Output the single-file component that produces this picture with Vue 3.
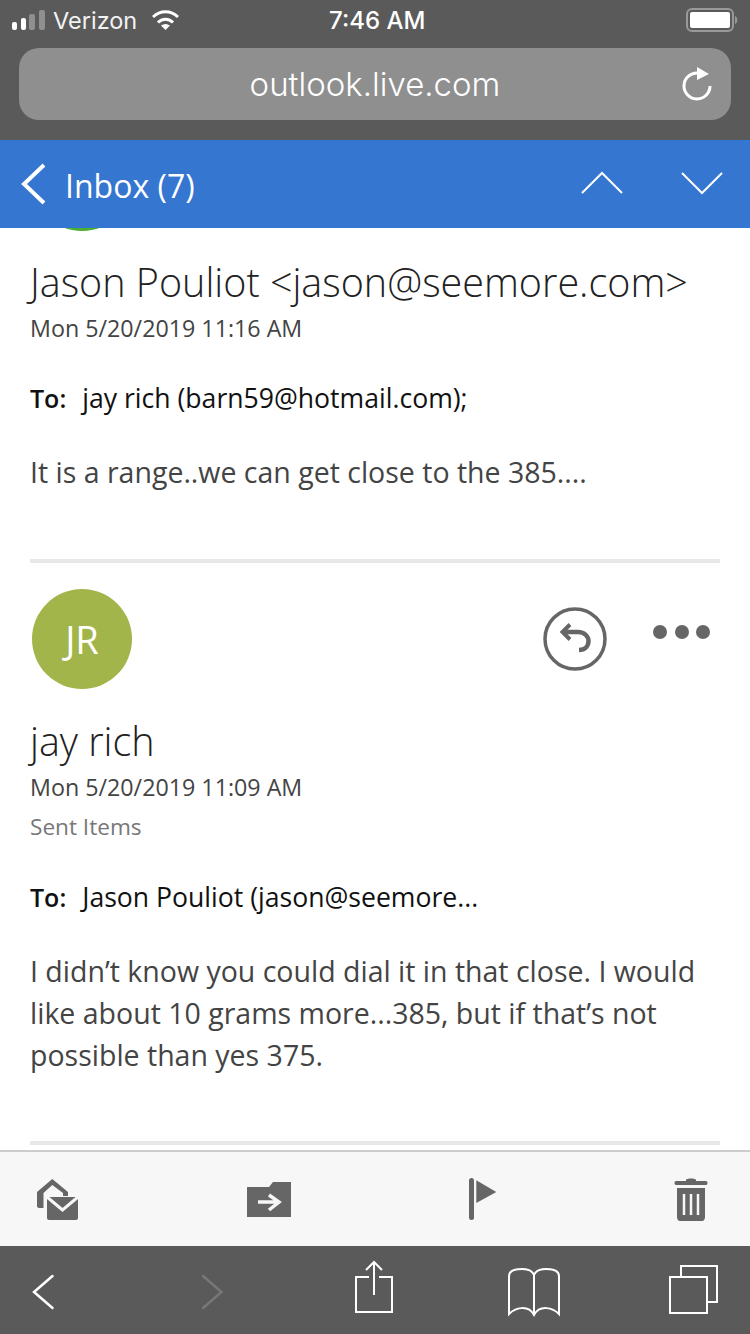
<template>
  <div class="phone">
    <div class="chrome">
      <div class="status">
        <div class="status-left">
          <svg width="34" height="22" viewBox="0 0 34 22">
            <rect x="0" y="13" width="5" height="8" rx="2" fill="#fff" />
            <rect x="9" y="9" width="5" height="12" rx="2" fill="#fff" />
            <rect x="17" y="5" width="6" height="16" rx="2" fill="#8f8f8f" />
            <rect x="27" y="1" width="6" height="20" rx="2" fill="#8f8f8f" />
          </svg>
          <span class="carrier">Verizon</span>
          <svg class="wifi" width="27" height="20" viewBox="0 0 27 20" fill="none" stroke="#fff" stroke-width="3">
            <path d="M1 7C8 0 19 0 26 7" />
            <path d="M6 12.500C10 8 17 8 21 12.500" />
            <path d="M13.500 20L9 15.500C12 13.500 15 13.500 18 15.500Z" fill="#fff" stroke="none" />
          </svg>
        </div>
        <span class="clock">7:46 AM</span>
        <svg class="battery" width="52" height="24" viewBox="0 0 52 24">
          <rect x="1" y="1" width="46" height="22" rx="5" fill="none" stroke="#999" stroke-width="2" />
          <rect x="4" y="4" width="40" height="16" rx="2" fill="#fff" />
          <path d="M49 8C52 9 52 15 49 16Z" fill="#999" />
        </svg>
      </div>
      <div class="address">
        <span class="url">outlook.live.com</span>
        <svg class="reload" width="34" height="38" viewBox="0 0 34 38" fill="none">
          <path d="M18 9A13 13 0 1 0 30 22" stroke="#fff" stroke-width="3" />
          <path d="M17 3L29 10L17 16Z" fill="#fff" />
        </svg>
      </div>
    </div>

    <div class="nav">
      <svg width="28" height="42" viewBox="0 0 28 42" fill="none" stroke="#fff" stroke-width="4">
        <path d="M25 2L5 21L25 40" />
      </svg>
      <span class="inbox">Inbox (7)</span>
      <svg class="arrow" width="42" height="24" viewBox="0 0 42 24" fill="none" stroke="#fff" stroke-width="2">
        <path d="M1 22L21 2L41 22" />
      </svg>
      <svg class="arrow" width="42" height="24" viewBox="0 0 42 24" fill="none" stroke="#fff" stroke-width="2">
        <path d="M1 2L21 22L41 2" />
      </svg>
    </div>

    <main class="thread">
      <div class="avatar-peek"></div>
      <section class="message first">
        <h2 class="sender">Jason Pouliot &lt;jason@seemore.com&gt;</h2>
        <div class="date">Mon 5/20/2019 11:16 AM</div>
        <div class="to"><b>To:</b><span>jay rich (barn59@hotmail.com);</span></div>
        <p class="body">It is a range..we can get close to the 385....</p>
      </section>
      <section class="message second">
        <div class="msg-head">
          <div class="avatar">JR</div>
          <div class="actions">
            <svg width="64" height="64" viewBox="0 0 64 64" fill="none" stroke="#666">
              <circle cx="32" cy="32" r="30" stroke-width="3.500" />
              <path d="M27 17.500L19.500 25L27 32.500" stroke-width="4" />
              <path d="M20 25H35C42 25 45.500 30 45.500 34C45.500 39 42 43 36 43" stroke-width="4.500" />
            </svg>
            <div class="dots"><i></i><i></i><i></i></div>
          </div>
        </div>
        <h2 class="sender name-below">jay rich</h2>
        <div class="date">Mon 5/20/2019 11:09 AM</div>
        <div class="folder">Sent Items</div>
        <div class="to"><b>To:</b><span>Jason Pouliot (jason@seemore...</span></div>
        <p class="body">I didn’t know you could dial it in that close. I would like about 10 grams more...385, but if that’s not possible than yes 375.</p>
      </section>
    </main>

    <div class="toolbar">
      <svg width="42" height="41" viewBox="0 0 42 41">
        <path d="M0 13L15.300 0L31 13V17H26V14L15.300 6L6.500 14V29H2C1 29 0 28 0 27Z" fill="#666" />
        <path d="M10 18H41V39C41 40 40 41 39 41H12C11 41 10 40 10 39Z" fill="#666" />
        <path d="M10 18L25.500 31L41 18" fill="none" stroke="#f7f7f7" stroke-width="3" />
      </svg>
      <svg class="tb-move" width="44" height="35" viewBox="0 0 44 35">
        <path d="M0 5H22L26 0H44V35H0Z" fill="#666" />
        <path d="M11 20H32M22 13L32 20L22 28" fill="none" stroke="#f7f7f7" stroke-width="3.500" />
      </svg>
      <svg class="tb-flag" width="28" height="42" viewBox="0 0 28 42">
        <rect x="0" y="0" width="5" height="42" rx="2.500" fill="#666" />
        <path d="M7.300 2.300L27.300 14L7.300 25Z" fill="#666" />
      </svg>
      <svg class="tb-trash" width="34" height="43" viewBox="0 0 34 43">
        <path d="M12 2C12 0 22 0 22 2V3H32C34 3 34 7 32 7H2C0 7 0 3 2 3H12Z" fill="#666" />
        <path d="M3 10H31V39C31 41 30 43 28 43H6C4 43 3 41 3 39Z" fill="#666" />
        <path d="M10 16V37M17 16V37M24 16V37" stroke="#f7f7f7" stroke-width="2.500" />
      </svg>
    </div>

    <div class="browser-bar">
      <svg width="24" height="64" viewBox="0 0 24 64" fill="none" stroke="#fff" stroke-width="2.500" stroke-linecap="round">
        <path d="M21.500 18L3 34L21.500 50" />
      </svg>
      <svg class="bb-forward" width="24" height="64" viewBox="0 0 24 64" fill="none" stroke="#777" stroke-width="2.500" stroke-linecap="round">
        <path d="M3 18L21.500 34L3 50" />
      </svg>
      <svg class="bb-share" width="40" height="64" viewBox="0 0 40 64" fill="none" stroke="#fff" stroke-width="2">
        <path d="M15 19H2V54H38V19H25" />
        <path d="M20 37V5M12 12L20 4L28 12" />
      </svg>
      <svg class="bb-book" width="54" height="64" viewBox="0 0 54 64" fill="none" stroke="#fff" stroke-width="2">
        <path d="M27 17C25 12 21 11 15 11C8 11 2 13 2 18V56C8 50 21 46 27 57C33 46 46 50 52 56V18C52 13 46 11 39 11C33 11 29 12 27 17ZM27 17V56" />
      </svg>
      <svg class="bb-tabs" width="51" height="64" viewBox="0 0 51 64" fill="none" stroke="#fff" stroke-width="2">
        <path d="M13 19V8H49V44H39" />
        <rect x="2" y="19" width="37" height="36" />
      </svg>
    </div>
  </div>
</template>

<script setup>
</script>

<style>
html,
body {
  margin: 0;
  background: #fff;
}
</style>

<style scoped>
.phone {
  width: 750px;
  height: 1334px;
  display: flex;
  flex-direction: column;
  overflow: hidden;
  font-family: "Open Sans", "Noto Sans", sans-serif;
}

.chrome {
  height: 140px;
  background: #5a5a5a;
  color: #fff;
  box-sizing: border-box;
  padding: 0 19px 0 12px;
  position: relative;
  z-index: 1;
}

.status {
  height: 40px;
  margin: 0 -7px 8px 0;
  display: flex;
  align-items: center;
  justify-content: space-between;
  position: relative;
  font-family: Inter, "Liberation Sans", sans-serif;
  font-size: 23.500px;
}

.status-left {
  display: flex;
  align-items: center;
  gap: 7px;
}

.carrier {
  color: #f2f2f2;
}

.wifi {
  margin-left: 8px;
}

.clock {
  position: absolute;
  left: 317px;
  top: 6px;
  font-size: 24px;
  font-weight: 500;
}

.address {
  height: 72px;
  margin-left: 7px;
  border-radius: 20px;
  background: #8f8f8f;
  display: flex;
  align-items: center;
  justify-content: center;
  position: relative;
}

.url {
  font-family: Inter, "Liberation Sans", sans-serif;
  font-size: 33px;
  font-weight: 300;
}

.reload {
  position: absolute;
  right: 17px;
  top: 16px;
}

.nav {
  height: 88px;
  background: #3476d0;
  color: #fff;
  display: flex;
  align-items: center;
  padding: 0 27px 0 19px;
  position: relative;
  z-index: 1;
}

.inbox {
  font-size: 32px;
  margin: 2px auto 0 18px;
}

.arrow {
  margin: -2px 0 0 58px;
}

.thread {
  flex: 1;
  min-height: 0;
  background: #fff;
  position: relative;
  padding: 0 30px;
}

.avatar-peek {
  position: absolute;
  left: 32px;
  top: -97px;
  width: 100px;
  height: 100px;
  border-radius: 50%;
  background: #4caf2f;
}

.message {
  border-bottom: 4px solid #e8e8e8;
  box-sizing: border-box;
}

.first {
  padding-top: 28px;
  height: 335px;
}

.second {
  padding-top: 26px;
  height: 582px;
}

.sender {
  margin: 0;
  font-size: 39.500px;
  font-weight: 300;
  line-height: 52px;
  color: #222;
}

.name-below {
  margin-top: 26px;
}

.date {
  font-size: 23.250px;
  line-height: 32px;
  color: #444;
  margin-top: 4px;
}

.folder {
  font-size: 22.600px;
  line-height: 32px;
  color: #777;
  margin-top: 8px;
}

.to {
  display: flex;
  gap: 16px;
  font-size: 26.600px;
  line-height: 36px;
  color: #111;
  margin-top: 36px;
}

.to b {
  font-size: 25px;
  font-weight: 600;
}

.body {
  margin: 35px 0 0;
  font-size: 28.500px;
  line-height: 42px;
  color: #444;
}

.msg-head {
  height: 100px;
  display: flex;
  justify-content: space-between;
  padding-left: 2px;
}

.avatar {
  width: 100px;
  height: 100px;
  border-radius: 50%;
  background: #a2b54b;
  color: #fff;
  font-size: 38px;
  font-weight: 400;
  display: flex;
  align-items: center;
  justify-content: center;
}

.actions {
  display: flex;
  align-items: flex-start;
  gap: 46px;
  padding: 18px 10px 0 0;
}

.dots {
  display: flex;
  gap: 7.500px;
  margin-top: 18px;
}

.dots i {
  width: 14px;
  height: 14px;
  border-radius: 50%;
  background: #666;
}

.toolbar {
  height: 94px;
  border-top: 2px solid #ccc;
  background: #f7f7f7;
  display: flex;
  align-items: center;
  padding-left: 37px;
}

.tb-move {
  margin-left: 168px;
}

.tb-flag {
  margin-left: 178px;
}

.tb-trash {
  margin-left: 177px;
}

.browser-bar {
  height: 88px;
  background: #5a5a5a;
  display: flex;
  align-items: flex-start;
  box-sizing: border-box;
  padding: 12px 0 0 31px;
}

.bb-forward {
  margin-left: 145px;
}

.bb-share {
  margin-left: 130px;
}

.bb-book {
  margin-left: 113px;
}

.bb-tabs {
  margin-left: 107px;
}
</style>
